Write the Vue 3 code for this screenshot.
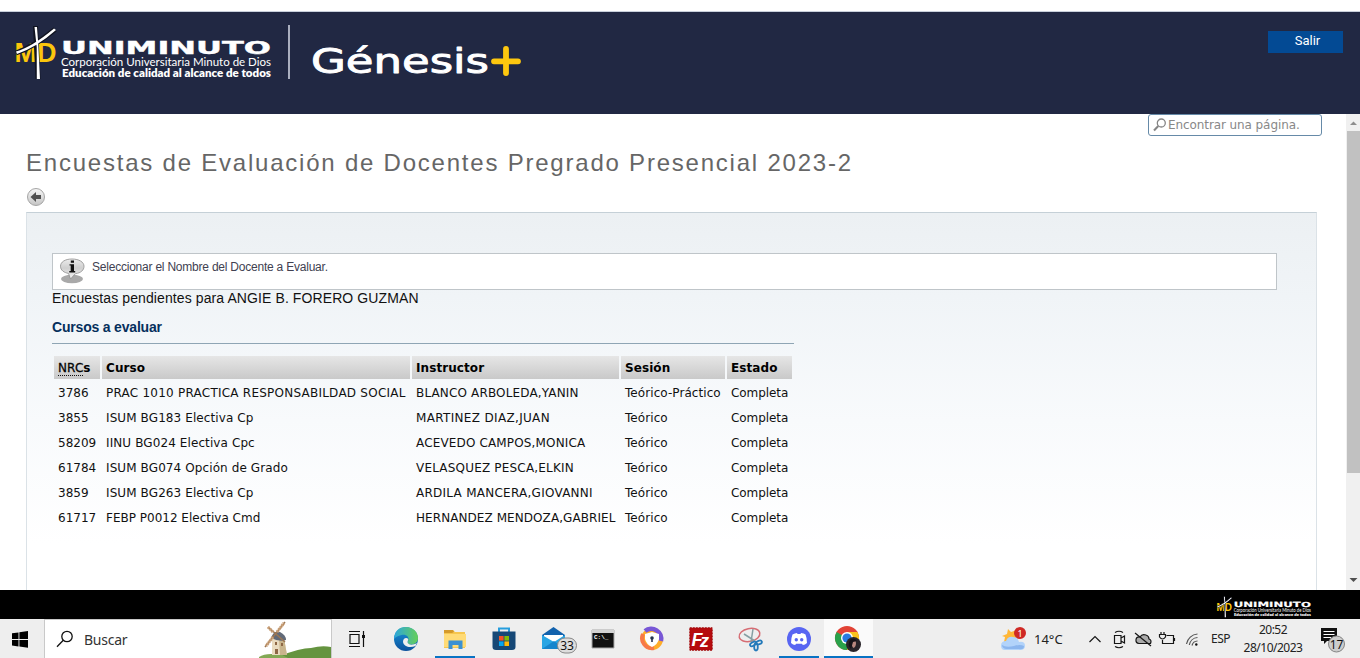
<script setup>
const courses = [
  ['3786', 'PRAC 1010 PRACTICA RESPONSABILDAD SOCIAL', 'BLANCO ARBOLEDA,YANIN', 'Teórico-Práctico', 'Completa'],
  ['3855', 'ISUM BG183 Electiva Cp', 'MARTINEZ DIAZ,JUAN', 'Teórico', 'Completa'],
  ['58209', 'IINU BG024 Electiva Cpc', 'ACEVEDO CAMPOS,MONICA', 'Teórico', 'Completa'],
  ['61784', 'ISUM BG074 Opción de Grado', 'VELASQUEZ PESCA,ELKIN', 'Teórico', 'Completa'],
  ['3859', 'ISUM BG263 Electiva Cp', 'ARDILA MANCERA,GIOVANNI', 'Teórico', 'Completa'],
  ['61717', 'FEBP P0012 Electiva Cmd', 'HERNANDEZ MENDOZA,GABRIEL', 'Teórico', 'Completa'],
]
</script>

<template>
  <div class="screen">
    <header class="header">
      <svg class="brand" width="540" height="102" viewBox="0 12 540 102">
        <defs>
          <g id="uni-logo">
            <text x="14.5" y="62.300" class="md" textLength="42" lengthAdjust="spacingAndGlyphs">MD</text>
            <path d="M35.5 26L38 79M16 53C28 49 42 40 55 29.5" stroke="#10131f" stroke-width="5" fill="none" />
            <path d="M34.5 27L37 27L38.2 43L40 79L36.8 79L36.7 47ZM16 51.5Q32 47 54 28.5L56 30Q37 47 17 54Z" fill="#fff" />
            <text x="61" y="54" class="uni" textLength="210" lengthAdjust="spacingAndGlyphs">UNIMINUTO</text>
            <text x="61" y="65.5" class="corp" textLength="210" lengthAdjust="spacingAndGlyphs">Corporación Universitaria Minuto de Dios</text>
            <text x="62" y="76.5" class="edu" textLength="209" lengthAdjust="spacingAndGlyphs">Educación de calidad al alcance de todos</text>
          </g>
        </defs>
        <use href="#uni-logo" />
        <path d="M289 25V79" stroke="#cdd1df" stroke-width="1.6" />
        <text x="311" y="73" class="genesis" textLength="178" lengthAdjust="spacingAndGlyphs">Génesis</text>
        <path d="M506 49V73M494 61.3H518" stroke="#fdc70f" stroke-width="5.8" stroke-linecap="round" />
      </svg>
      <button class="exit">Salir</button>
    </header>

    <div class="body">
      <main class="page">
        <div class="find">
          <svg width="14" height="14" viewBox="0 0 14 14" fill="none" stroke="#858585"><circle cx="8.3" cy="5" r="4" stroke-width="1.3" /><path d="M5.3 8L1 12.5" stroke-width="2" /></svg>
          <span>Encontrar una página.</span>
        </div>
        <h1>Encuestas de Evaluación de Docentes Pregrado Presencial 2023-2</h1>
        <svg class="back" width="20" height="20" viewBox="0 0 20 20">
          <defs><linearGradient id="grey" x2="0" y2="1"><stop stop-color="#f7f7f7" /><stop offset="1" stop-color="#c4c4c4" /></linearGradient></defs>
          <circle cx="10" cy="10" r="8.5" fill="url(#grey)" stroke="#a5a5a5" /><path d="M4.5 10L10 5V8H15V12H10V15Z" fill="#505050" />
        </svg>
        <section class="panel">
          <div class="notice">
            <svg width="28" height="28" viewBox="0 0 28 28">
              <defs><linearGradient id="bub" x2="0" y2="1"><stop stop-color="#ececec" /><stop offset=".45" stop-color="#cfcfcf" /><stop offset="1" stop-color="#f3f3f3" /></linearGradient></defs>
              <ellipse cx="13" cy="21" rx="11" ry="4.2" fill="#a9a9a9" />
              <path d="M13 1C6 1 1.5 4 1.500 8.300C1.500 12.300 5 14.600 9.500 15.400L11.500 21L16.500 15.600C22 15 25 12 25 8.300C25 4 20 1 13 1Z" fill="url(#bub)" stroke="#8b8b8b" stroke-width=".8" />
              <path d="M11.8 2.4H15V4.8H11.8ZM10.5 6.2H15V13H16.2V14.5H10.3V13H11.7V7.6H10.5Z" fill="#111" />
            </svg>
            <span>Seleccionar el Nombre del Docente a Evaluar.</span>
          </div>
          <p class="pending">Encuestas pendientes para ANGIE B. FORERO GUZMAN</p>
          <h2>Cursos a evaluar</h2>
          <table>
            <colgroup><col class="c1"><col class="c2"><col class="c3"><col class="c4"><col class="c5"></colgroup>
            <thead><tr><th><abbr>NRC</abbr>s</th><th>Curso</th><th>Instructor</th><th>Sesión</th><th>Estado</th></tr></thead>
            <tbody><tr v-for="row in courses" :key="row[0]"><td v-for="(cell, i) in row" :key="i">{{ cell }}</td></tr></tbody>
          </table>
        </section>
      </main>
      <aside class="scroll">
        <svg width="14" height="17" viewBox="0 0 14 17"><path d="M4 11L7.5 7.5L11 11Z" fill="#8d8d8d" /></svg>
        <div class="thumb"></div>
        <svg class="down" width="14" height="17" viewBox="0 0 14 17"><path d="M3.5 5L7.5 9L11.5 5Z" fill="#505050" /></svg>
      </aside>
    </div>

    <footer class="strip">
      <svg width="96" height="22" viewBox="13 25 261 56" preserveAspectRatio="none"><use href="#uni-logo" /></svg>
    </footer>

    <nav class="taskbar">
      <div class="start"><svg width="16" height="17" viewBox="0 0 16 17"><path d="M0 2.3L6.5 1.4V8H0ZM7.4 1.2L16 0V8H7.4ZM0 9H6.5V15.4L0 14.5ZM7.4 9H16V16.7L7.4 15.5Z" /></svg></div>
      <div class="search">
        <svg width="18" height="18" viewBox="0 0 18 18" fill="none" stroke="#111" stroke-width="1.3"><circle cx="11" cy="6.5" r="5.2" /><path d="M7.3 10.3L1 16.7" /></svg>
        <span>Buscar</span>
        <svg class="mill" width="74" height="38" viewBox="0 0 74 38">
          <path d="M2 38Q8 33 23 36Q43 28 54 28Q65 25 74 27V38Z" fill="#65943f" /><path d="M2 37Q9 32 25 35L31 38H2Z" fill="#83a955" />
          <path d="M15 18H27L30 35H15Z" fill="#e9dbc0" /><path d="M22 18H27L30 35H23Z" fill="#c9b58d" />
          <path d="M14 18Q17 10 23 12Q29 15 29 20Q22 22 14 18Z" fill="#626a78" />
          <path d="M18 22h2v3h-2zM18 29h3v5h-3zM24 23h2v3h-2z" fill="#8d6745" />
          <path d="M8 27L28 2M11 7L28 22" stroke="#9b7653" stroke-width="1.6" /><path d="M20 12L27 3M16 17L9 26M16 12L11 7" stroke="#c99f76" stroke-width="3" stroke-dasharray="2 .6" />
        </svg>
      </div>
      <div class="apps">
        <div class="app"><svg width="24" height="24" viewBox="0 0 24 24" fill="none" stroke="#111" stroke-width="1.2"><path d="M5 7.5H14V16.500H5ZM4 4.500H15M4 19.500H15M18.500 4V20" /><path d="M17 8H20V11H17Z" fill="#111" stroke="none" /></svg></div>
        <div class="app"><svg width="26" height="26" viewBox="0 0 26 26">
          <defs><linearGradient id="eg"><stop stop-color="#2ba5de" /><stop offset="1" stop-color="#66cf58" /></linearGradient><linearGradient id="eb" x2="0" y2="1"><stop stop-color="#1897dc" /><stop offset="1" stop-color="#0c519c" /></linearGradient></defs>
          <circle cx="13" cy="13" r="12" fill="url(#eb)" />
          <path d="M1 12C2 4 7 1 13 1C20 1 25 6 25 12C25 16 22 18.5 18 18.5C15 18.5 14 17 15 15C17 11 13 8 8.5 9C4 10 1 12 1 14Z" fill="url(#eg)" />
          <path d="M10 16C10 12.500 13 11 15.300 13C15 15 14 16 15 17.300C16 19 20 19.300 24 17L22.500 20C17 22 11 21 10 16Z" fill="#eee" />
        </svg></div>
        <div class="app open"><svg width="24" height="24" viewBox="0 0 24 24"><path d="M1 3H10L12 5H22V21H1Z" fill="#f6c64e" /><path d="M1 3H10L11 5L9 6H1Z" fill="#d59a2a" /><path d="M1 7H23V20H1Z" fill="#ffdb76" /><path d="M5.500 13.500H19.500V22H15.500V18H9.500V22H5.500Z" fill="#3b91d2" /></svg></div>
        <div class="app"><svg width="24" height="26" viewBox="0 0 24 26"><path d="M7 6V2.500H17V6" fill="none" stroke="#269ddd" stroke-width="2" /><path d="M.5 5.500H23.500V21Q23.500 24 20 24H4Q.5 24 .5 21Z" fill="#164876" /><path d="M7 10h4.600v4.600H7z" fill="#f35325" /><path d="M12.400 10H17v4.600h-4.600z" fill="#81bc06" /><path d="M7 15.400h4.600V20H7z" fill="#05a6f0" /><path d="M12.400 15.400H17V20h-4.600z" fill="#ffba08" /></svg></div>
        <div class="app mail"><svg width="38" height="30" viewBox="0 0 38 30"><path d="M1 11L12.500 3L24 11V25H1Z" fill="#1262ad" /><path d="M3 11H22V18H3Z" fill="#fff" /><path d="M1 11L13 18L24 11V25H1Z" fill="#28a5e4" /><path d="M1 25L13 17L24 25Z" fill="#1585cd" /><rect x="16.500" y="14" width="19" height="15" rx="7.500" fill="#ddd" stroke="#888" /><text x="26" y="26" class="badge">33</text></svg></div>
        <div class="app"><svg width="24" height="20" viewBox="0 0 24 20"><path d="M1 1H23V19H1Z" fill="#111" stroke="#aaa" /><path d="M1 1H23V4H1Z" fill="#d3d3d3" /><text x="3" y="9.5" class="cmd">C:\_</text></svg></div>
        <div class="app"><svg width="26" height="26" viewBox="0 0 26 26"><circle cx="13" cy="13" r="8.800" fill="#ffad29" stroke="#ffad29" stroke-width="4.500" /><path d="M6 5A10 10 0 0 1 22 15" fill="none" stroke="#7857d6" stroke-width="4.500" /><path d="M4 8A10 10 0 0 0 15 22" fill="none" stroke="#f77948" stroke-width="4" /><path d="M13 6L20 8V13Q19 18 13 21Q7 18 6 13V8Z" fill="#fff" /><circle cx="13" cy="12" r="1.800" fill="#28334e" /><path d="M12.200 12h1.600v4h-1.600z" fill="#28334e" /></svg></div>
        <div class="app"><svg width="24" height="24" viewBox="0 0 24 24"><path d="M.8.8H23.200V23.200H.8Z" fill="#b60b0e" stroke="#9e080a" stroke-dasharray="2 1" /><text x="2.500" y="18.500" class="fz">F<tspan dx="-2.500" dy="1.500">z</tspan></text></svg></div>
        <div class="app"><svg width="26" height="26" viewBox="0 0 26 26" fill="none"><ellipse cx="12.500" cy="9" rx="10.500" ry="6.500" transform="rotate(-12 12.500 9)" stroke="#d66d74" stroke-width="1.500" /><path d="M7 8L18 15M16 3L14 16" stroke="#859fa3" stroke-width="1.500" /><ellipse cx="16" cy="18" rx="1.800" ry="3.200" transform="rotate(60 16 18)" stroke="#247aba" stroke-width="1.800" /><ellipse cx="22" cy="16.500" rx="1.800" ry="3" transform="rotate(70 22 16.500)" stroke="#247aba" stroke-width="1.800" /><ellipse cx="19" cy="21" rx="1.800" ry="3.500" stroke="#247aba" stroke-width="1.800" /></svg></div>
        <div class="app open"><svg width="24" height="24" viewBox="0 0 24 24"><circle cx="12" cy="12" r="12" fill="#5865f2" /><path d="M5.500 7.500Q8 6 10 6L10.500 7H13.500L14 6Q17 6 18.500 7.500Q20 11 20 16Q18 18 15.800 18L15 16.700H9L8.200 18Q6 18 4 16Q4 11 5.500 7.500Z" fill="#fff" /><circle cx="9.300" cy="12.700" r="1.700" fill="#5865f2" /><circle cx="14.700" cy="12.700" r="1.700" fill="#5865f2" /></svg></div>
        <div class="app open active"><svg width="28" height="28" viewBox="0 0 28 28"><circle cx="13" cy="13" r="12" fill="#e24336" /><path d="M13 13L2.600 7A12 12 0 0 0 13 25L18 16Z" fill="#2aa24b" /><path d="M13 7H23.400A12 12 0 0 1 13 25L18 16Z" fill="#fbc31d" /><circle cx="13" cy="13" r="6" fill="#fff" /><circle cx="13" cy="13" r="4.600" fill="#287be0" /><circle cx="19.500" cy="19.500" r="7.500" fill="#29242a" /><path d="M18 15Q21.500 14 22 18Q22 22 19.500 23Q17 21 18 15Z" fill="#b98880" /><path d="M16 15Q20 12 23 16L19 17L17 24Q13 20 16 15Z" fill="#171319" /></svg></div>
      </div>
      <div class="tray">
        <svg class="weather" width="27" height="27" viewBox="0 0 27 27"><path d="M8 4L11 7L17 5L15 17L4 17L5 12L2 11L7 9Z" fill="#ffb738" /><path d="M5 25Q1 25 1 20.500Q1 16 6 16Q8 11 13 12Q18 12 19 17Q25 16 25 21Q25 25 20 25Z" fill="#b2d3fa" /><path d="M6 24Q2 23 2 20Q6 23 14 21Q20 19 24 21Q24 25 19 24Z" fill="#8cb6ee" /><circle cx="20" cy="8" r="6" fill="#cf2925" /><text x="20" y="11.500" class="one">1</text></svg>
        <span class="temp">14°C</span>
        <svg class="status" width="112" height="24" viewBox="1087 627 112 24" fill="none" stroke="#161616" stroke-width="1.2">
          <path d="M1089.500 642L1095 636.500L1100.500 642M1114.500 635.500H1121V643.500H1114.500ZM1121 638L1124.500 636V643L1121 641M1115 632.500Q1119 630 1123 632.500M1115 646.500Q1119 649 1123 646.500" />
          <path d="M1139 643.500Q1135.500 643 1136 639.500Q1136.500 636.500 1140 637Q1142 633.500 1146 635Q1149 636 1149 639Q1152 640 1150.500 643.500Z" fill="#aaa" /><path d="M1135 633L1151 646" />
          <path d="M1166.500 635.500H1173.500V643.500H1162.500V640M1174.500 638V641M1159.500 634.500H1165.500V637Q1162.500 641 1159.500 637ZM1161 632V634.500M1164 632V634.500" />
          <path d="M1186.500 644A12 12 0 0 1 1197.500 634M1189.300 645A9 9 0 0 1 1197.500 637.500M1192 645.500A6 6 0 0 1 1197.500 641" stroke="#555" /><circle cx="1196.300" cy="644.500" r="1.200" fill="#111" stroke="none" />
        </svg>
        <span class="lang">ESP</span>
        <div class="clock"><span>20:52</span><span>28/10/2023</span></div>
        <svg class="notes" width="29" height="26" viewBox="0 0 29 26"><path d="M1 1H17V14H7L4 17V14H1Z" fill="#111" /><path d="M3.500 4.500H14.500M3.500 7.500H14.500M3.500 10.500H11" stroke="#fff" stroke-width="1.100" /><circle cx="16.500" cy="17" r="8" fill="#ccc" stroke="#858585" /><text x="16.500" y="21.500" class="badge">17</text></svg>
      </div>
    </nav>
  </div>
</template>

<style>
body { margin: 0; overflow: hidden; }
</style>

<style scoped>
* { box-sizing: border-box; }
svg { display: block; flex: none; }
.screen { width: 1360px; height: 658px; display: flex; flex-direction: column; background: #fff; overflow: hidden; font-family: "Liberation Sans", Arial, sans-serif; padding-top: 11px; }
.header { height: 103px; flex: none; border-top: 1px solid #c8cfdb; background: #212843; display: flex; justify-content: space-between; align-items: flex-start; padding-right: 17px; }
.md { font: bold 27px "Liberation Sans", sans-serif; fill: #fbc60c; }
.uni { font: bold 18px "DejaVu Sans", sans-serif; fill: #fff; stroke: #fff; stroke-width: .4px; }
.corp { font: 12px Lato, sans-serif; fill: #fff; }
.edu { font: 800 11px Lato, sans-serif; fill: #fff; }
.genesis { font: 33px "DejaVu Sans", sans-serif; fill: #fff; stroke: #fff; stroke-width: .9px; stroke-linejoin: round; }
.exit { width: 75px; height: 22px; margin: 19px 0 0; padding: 0 0 3px 4px; border: 0; background: #034a94; color: #fff; font: 13px/19px Roboto, sans-serif; }
.body { height: 476px; flex: none; display: flex; justify-content: space-between; }
.page { width: 1317px; padding-left: 26px; display: flex; flex-direction: column; overflow: visible; }
.find { width: 174px; height: 22px; flex: none; align-self: flex-end; margin-right: -5px; border: 1px solid #668aa8; border-radius: 3px; background: #fff; display: flex; align-items: center; padding-left: 4px; color: #888; font: 12px "DejaVu Sans", sans-serif; white-space: nowrap; }
.find span { margin-left: 1px; letter-spacing: -.09px; }
h1 { margin: 13px 0 0; height: 28px; font-weight: 400; font-size: 24px; line-height: 28px; letter-spacing: 1.78px; color: #666; white-space: nowrap; }
.back { margin: 10px 0 0; }
.panel { height: 378px; margin-top: 5px; border: 1px solid #dbe2e7; border-top-color: #c5d0d7; border-bottom: 0; background: linear-gradient(#ecf0f3, #f0f4f7 22%, #f8fafc 55%, #fff 88%); padding: 40px 39px 0 25px; }
.notice { height: 37px; border: 1px solid #bfc5c9; background: #fff; display: flex; padding: 4px 0 0 6px; color: #414151; font-size: 12px; line-height: 18px; }
.notice span { margin-left: 5px; letter-spacing: -.22px; }
.pending { margin: 0; height: 17px; font-size: 14px; line-height: 17px; color: #111; letter-spacing: .1px; }
h2 { margin: 11px 0 0; width: 742px; height: 26px; border-bottom: 1px solid #8fa5b4; font-size: 14px; line-height: 18px; color: #052f5c; letter-spacing: -.19px; }
table { width: 742px; margin-top: 10px; border-collapse: separate; border-spacing: 2px 2px; table-layout: fixed; font: 12px/15px "DejaVu Sans", sans-serif; color: #111; }
.c1 { width: 46px; } .c2 { width: 308px; } .c3 { width: 207px; } .c4 { width: 104px; } .c5 { width: 65px; }
th, td { height: 23px; padding: 5px 4px 3px; text-align: left; white-space: nowrap; overflow: visible; }
th { background: linear-gradient(#e6e6e6, #c9c9c9); color: #000; font-weight: 700; letter-spacing: .08px; }
td:nth-child(2) { letter-spacing: .1px; }
td:nth-child(3) { letter-spacing: .15px; }
td:nth-child(4) { letter-spacing: .07px; }
td:nth-child(5) { letter-spacing: -.08px; }
tr:first-child td:nth-child(2) { letter-spacing: .235px; }
tr:nth-child(2) td:nth-child(3) { letter-spacing: .33px; }
tr:nth-child(4) td:nth-child(3) { letter-spacing: .19px; }
tr:nth-child(5) td:nth-child(3) { letter-spacing: .26px; }
tr:nth-child(6) td:nth-child(3) { letter-spacing: .07px; }
tr:nth-child(6) td:nth-child(2) { letter-spacing: 0; }
abbr { font-weight: 400; text-decoration: none; border-bottom: 1px dotted #111; -webkit-text-stroke: .3px #111; }
.scroll { width: 14px; background: #f0f0f0; display: flex; flex-direction: column; }
.thumb { height: 342px; margin-left: 1px; background: #c1c1c1; }
.down { margin-top: auto; }
.strip { height: 29px; flex: none; background: #000; display: flex; justify-content: flex-end; padding: 6px 48px 0 0; }
.taskbar { height: 39px; flex: none; background: #eee; display: flex; color: #222; font-family: "Noto Sans", sans-serif; }
.start { width: 44px; padding: 12px 0 0 12px; }
.search { width: 288px; background: #fff; border: 1px solid #c9c9c9; border-width: 1px 1px 0; display: flex; align-items: center; padding-left: 11px; font-size: 14px; }
.search span { margin-left: 10px; color: #333; letter-spacing: -.25px; }
.mill { margin-left: auto; }
.apps { display: flex; }
.app { width: 49.2px; display: flex; align-items: center; justify-content: center; }
.app.open { background: linear-gradient(#0873c4, #0873c4) center bottom / 40px 2px no-repeat; }
.app.active { background: linear-gradient(#0873c4, #0873c4) center bottom / 100% 2px no-repeat #fafafa; }
.mail svg { margin-left: 14px; }
.badge { font: 12px "Noto Sans", sans-serif; fill: #111; text-anchor: middle; }
.cmd { font: bold 6px "Liberation Mono", monospace; fill: #fff; }
.fz { font: italic bold 18px "Liberation Sans", sans-serif; fill: #fff; }
.one { font: 9px "Noto Sans", sans-serif; fill: #fff; text-anchor: middle; }
.tray { margin-left: auto; display: flex; align-items: center; height: 39px; }
.weather { width: 27px; }
.temp { width: 49px; margin: 0 0 0 7px; font-size: 13px; white-space: nowrap; }
.status { margin-left: 4px; }
.lang { width: 28px; margin-left: 12px; font-size: 12px; letter-spacing: -.5px; }
.clock { width: 68px; margin-left: 0; display: flex; flex-direction: column; align-items: center; font-size: 12px; line-height: 18px; letter-spacing: -.5px; }
.notes { margin: 3px 11px 0 13px; }
</style>
